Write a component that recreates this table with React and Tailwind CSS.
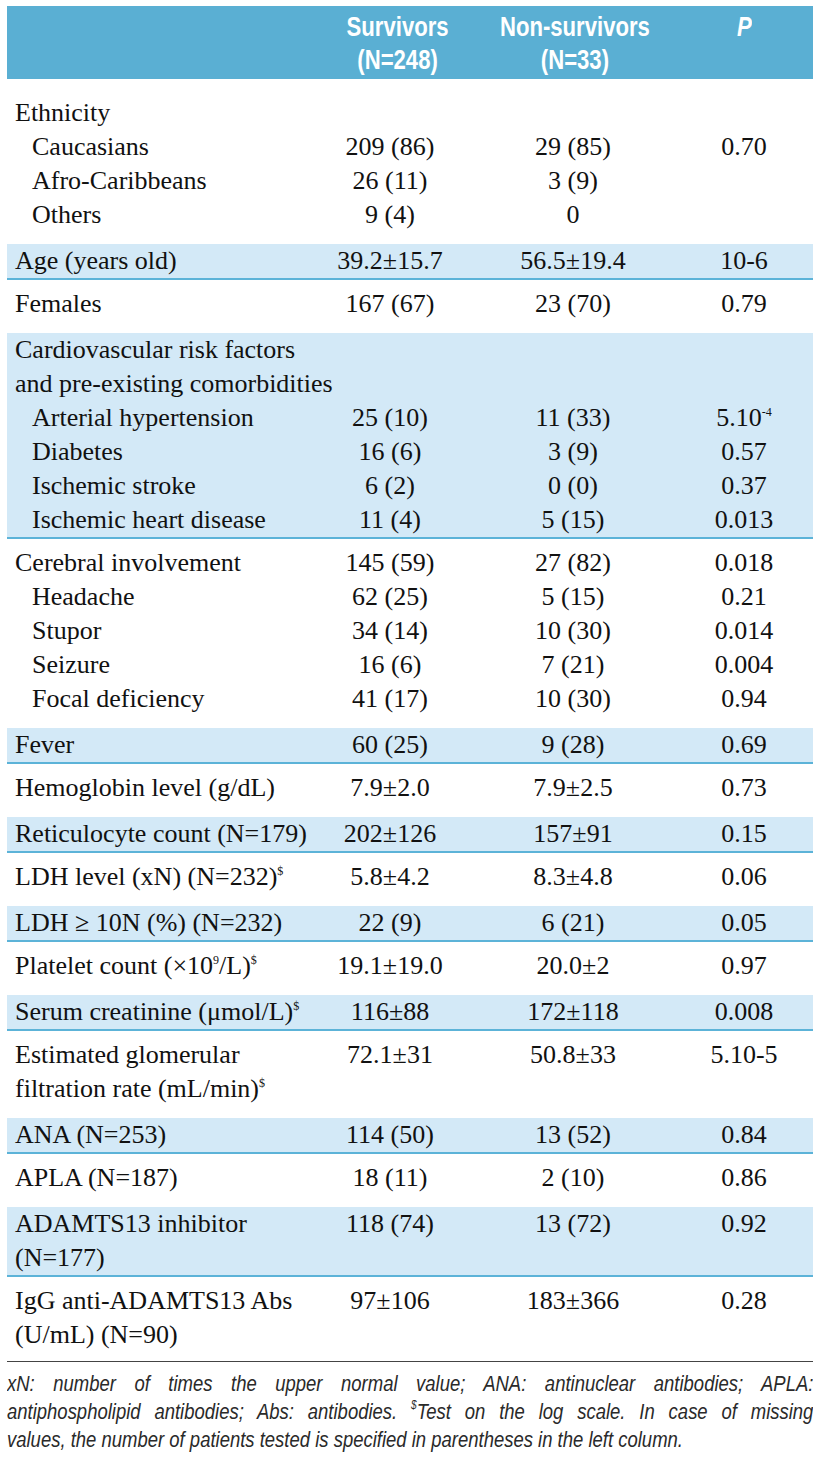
import React from "react";

const GRID = "grid grid-cols-[323px_120px_246px_96px_1fr] items-start";

function Sup({ children }) {
  return <span className="relative -top-[10px] text-[12px] leading-none">{children}</span>;
}

function Line({ label, a, b, p, indent, span }) {
  if (span) {
    return (
      <div className="h-[34px] leading-[34px] whitespace-nowrap pl-[8px]">{label}</div>
    );
  }
  return (
    <div className={GRID}>
      <div className={indent ? "pl-[25px] leading-[34px] whitespace-nowrap" : "pl-[8px] leading-[34px] whitespace-nowrap"}>{label}</div>
      <div className="text-center leading-[34px] whitespace-nowrap">{a}</div>
      <div className="text-center leading-[34px] whitespace-nowrap">{b}</div>
      <div className="text-center leading-[34px] whitespace-nowrap">{p}</div>
      <div />
    </div>
  );
}

const sections = [
  {
    band: false,
    first: true,
    lines: [
      { label: "Ethnicity" },
      { label: "Caucasians", indent: true, a: "209 (86)", b: "29 (85)", p: "0.70" },
      { label: "Afro-Caribbeans", indent: true, a: "26 (11)", b: "3 (9)" },
      { label: "Others", indent: true, a: "9 (4)", b: "0" },
    ],
  },
  { band: true, lines: [{ label: "Age (years old)", a: "39.2±15.7", b: "56.5±19.4", p: "10-6" }] },
  { band: false, lines: [{ label: "Females", a: "167 (67)", b: "23 (70)", p: "0.79" }] },
  {
    band: true,
    lines: [
      { label: "Cardiovascular risk factors", span: true },
      { label: "and pre-existing comorbidities", span: true },
      { label: "Arterial hypertension", indent: true, a: "25 (10)", b: "11 (33)", p: <>5.10<Sup>-4</Sup></> },
      { label: "Diabetes", indent: true, a: "16 (6)", b: "3 (9)", p: "0.57" },
      { label: "Ischemic stroke", indent: true, a: "6 (2)", b: "0 (0)", p: "0.37" },
      { label: "Ischemic heart disease", indent: true, a: "11 (4)", b: "5 (15)", p: "0.013" },
    ],
  },
  {
    band: false,
    lines: [
      { label: "Cerebral involvement", a: "145 (59)", b: "27 (82)", p: "0.018" },
      { label: "Headache", indent: true, a: "62 (25)", b: "5 (15)", p: "0.21" },
      { label: "Stupor", indent: true, a: "34 (14)", b: "10 (30)", p: "0.014" },
      { label: "Seizure", indent: true, a: "16 (6)", b: "7 (21)", p: "0.004" },
      { label: "Focal deficiency", indent: true, a: "41 (17)", b: "10 (30)", p: "0.94" },
    ],
  },
  { band: true, lines: [{ label: "Fever", a: "60 (25)", b: "9 (28)", p: "0.69" }] },
  { band: false, lines: [{ label: "Hemoglobin level (g/dL)", a: "7.9±2.0", b: "7.9±2.5", p: "0.73" }] },
  { band: true, lines: [{ label: "Reticulocyte count (N=179)", a: "202±126", b: "157±91", p: "0.15" }] },
  { band: false, lines: [{ label: <>LDH level (xN) (N=232)<Sup>$</Sup></>, a: "5.8±4.2", b: "8.3±4.8", p: "0.06" }] },
  { band: true, lines: [{ label: "LDH ≥ 10N (%) (N=232)", a: "22 (9)", b: "6 (21)", p: "0.05" }] },
  { band: false, lines: [{ label: <>Platelet count (×10<Sup>9</Sup>/L)<Sup>$</Sup></>, a: "19.1±19.0", b: "20.0±2", p: "0.97" }] },
  { band: true, lines: [{ label: <>Serum creatinine (μmol/L)<Sup>$</Sup></>, a: "116±88", b: "172±118", p: "0.008" }] },
  { band: false, lines: [{ label: <>Estimated glomerular<br />filtration rate (mL/min)<Sup>$</Sup></>, a: "72.1±31", b: "50.8±33", p: "5.10-5" }] },
  { band: true, lines: [{ label: "ANA (N=253)", a: "114 (50)", b: "13 (52)", p: "0.84" }] },
  { band: false, lines: [{ label: "APLA (N=187)", a: "18 (11)", b: "2 (10)", p: "0.86" }] },
  { band: true, lines: [{ label: <>ADAMTS13 inhibitor<br />(N=177)</>, a: "118 (74)", b: "13 (72)", p: "0.92" }] },
  { band: false, last: true, lines: [{ label: <>IgG anti-ADAMTS13 Abs<br />(U/mL) (N=90)</>, a: "97±106", b: "183±366", p: "0.28" }] },
];

export default function App() {
  return (
    <div className="w-[820px] min-h-[1458px] bg-white pt-[6px] px-[7px] text-[#111] overflow-hidden">
      <div className="bg-[#5aafd3] h-[73px] pt-[4px] text-white font-bold text-[28px] leading-[33px] font-['Liberation_Sans',sans-serif]">
        <div className="grid grid-cols-[323px_120px_246px_96px_1fr]">
          <div />
          <div className="flex justify-center pl-[16px]">
            <div className="scale-x-[0.79] text-center whitespace-nowrap">Survivors<br />(N=248)</div>
          </div>
          <div className="flex justify-center pl-[4px]">
            <div className="scale-x-[0.79] text-center whitespace-nowrap">Non-survivors<br />(N=33)</div>
          </div>
          <div className="flex justify-center">
            <div className="scale-x-[0.79] italic">P</div>
          </div>
          <div />
        </div>
      </div>
      <div className="font-['Liberation_Serif',serif] text-[26px]">
        {sections.map((s, i) => (
          <div
            key={i}
            className={
              s.band
                ? "bg-[#d3e9f7] border-b-2 border-[#5cb3d8]"
                : s.first
                ? "pt-[17px] pb-[12px]"
                : s.last
                ? "pt-[7px] pb-[9px]"
                : "pt-[7px] pb-[12px]"
            }
          >
            {s.lines.map((l, j) => (
              <Line key={j} {...l} />
            ))}
          </div>
        ))}
      </div>
      <div className="border-t border-[#444] pt-[8px] overflow-hidden">
        <div className="w-[960px] origin-left scale-x-[0.84] font-['Liberation_Sans',sans-serif] italic text-[22px] leading-[28px] text-[#2a2a2a]">
          <div className="text-justify [text-align-last:justify]">
            xN: number of times the upper normal value; ANA: antinuclear antibodies; APLA:
          </div>
          <div className="text-justify [text-align-last:justify]">
            antiphospholipid antibodies; Abs: antibodies. <Sup>$</Sup>Test on the log scale. In case of missing
          </div>
          <div>values, the number of patients tested is specified in parentheses in the left column.</div>
        </div>
      </div>
    </div>
  );
}
